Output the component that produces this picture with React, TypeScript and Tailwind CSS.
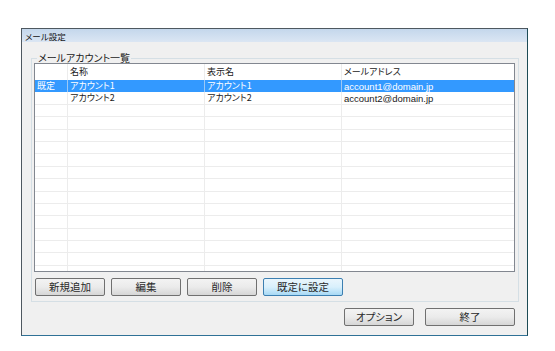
import React from "react";

const jp = "font-['Noto_Sans_CJK_JP','Noto_Sans',sans-serif] [font-feature-settings:'palt']";

const rows = [
  { def: "既定", name: "アカウント1", display: "アカウント1", mail: "account1@domain.jp", selected: true },
  { def: "", name: "アカウント2", display: "アカウント2", mail: "account2@domain.jp", selected: false },
];

function Cell({ w, children, sel }: { w: string; children?: React.ReactNode; sel?: boolean }) {
  return (
    <div
      className={`${w} h-full flex items-center pl-[2px] border-r ${
        sel ? "border-[#9cc8f5] text-white" : "border-[#ececec] text-[#1a1a1a]"
      } text-[9px] leading-[10px] whitespace-nowrap`}
    >
      {children}
    </div>
  );
}

function Btn({ label, w, active }: { label: string; w: string; active?: boolean }) {
  return (
    <button
      className={`${w} h-[18px] rounded-[2px] border text-[10.5px] leading-[14px] text-[#2a2a2a] flex items-center justify-center ${
        active
          ? "border-[#3c7fb1] bg-gradient-to-b from-[#eaf6fd] via-[#d9f0fc] to-[#a7d9f5]"
          : "border-[#707070] bg-gradient-to-b from-[#f3f3f3] via-[#ebebeb] to-[#d6d6d6]"
      }`}
    >
      {label}
    </button>
  );
}

export default function App() {
  const filler = Array.from({ length: 14 });
  return (
    <div className={`w-[555px] h-[351px] bg-white pt-[28px] pl-[21px] ${jp}`}>
      <div className="w-[507px] h-[308px] flex flex-col border border-[#4e5860] border-r-[#1d4b55] border-b-[#2f7196] bg-[#f0f0f0]">
        {/* title bar */}
        <div className="h-[13px] bg-gradient-to-b from-[#c4d7ec] to-[#dbe6f3] flex items-center pl-[3px] text-[8.5px] leading-[12px] text-[#111]">
          メール設定
        </div>

        <div className="flex-1 flex flex-col pl-[9px] pr-[8px]">
          <fieldset className="mt-[11px] border border-[#d5dfe5] pl-[2px] pr-[3px] pb-[5px]">
            <legend className="ml-[3px] px-[1px] text-[10px] leading-[10px] text-[#1a1a1a]">
              メールアカウント一覧
            </legend>

            <div className="h-[209px] border border-[#828790] bg-white flex flex-col overflow-hidden">
              <div className="h-[16px] shrink-0 flex">
                <Cell w="w-[33px]" />
                <Cell w="w-[137px]">名称</Cell>
                <Cell w="w-[137px]">表示名</Cell>
                <div className="flex-1 flex items-center pl-[2px] text-[9px] leading-[10px] text-[#1a1a1a]">メールアドレス</div>
              </div>
              {rows.map((r) => (
                <div
                  key={r.name}
                  className={`h-[12.4px] shrink-0 flex ${r.selected ? "bg-[#3399ff]" : "border-b border-[#ececec]"}`}
                >
                  <Cell w="w-[33px]" sel={r.selected}>{r.def}</Cell>
                  <Cell w="w-[137px]" sel={r.selected}>{r.name}</Cell>
                  <Cell w="w-[137px]" sel={r.selected}>{r.display}</Cell>
                  <div
                    className={`flex-1 flex items-center pl-[2px] font-['Liberation_Sans',Arial,sans-serif] text-[9.5px] leading-[11px] ${
                      r.selected ? "text-white" : "text-[#1a1a1a]"
                    }`}
                  >
                    {r.mail}
                  </div>
                </div>
              ))}
              {filler.map((_, i) => (
                <div key={i} className="h-[12.4px] shrink-0 flex border-b border-[#ececec]">
                  <Cell w="w-[33px]" />
                  <Cell w="w-[137px]" />
                  <Cell w="w-[137px]" />
                  <div className="flex-1" />
                </div>
              ))}
            </div>

            <div className="mt-[6px] ml-[1px] flex gap-[6px]">
              <Btn label="新規追加" w="w-[70px]" />
              <Btn label="編集" w="w-[70px]" />
              <Btn label="削除" w="w-[70px]" />
              <Btn label="既定に設定" w="w-[80px]" active />
            </div>
          </fieldset>

          <div className="mt-[6px] flex justify-end gap-[11px] pr-[4px]">
            <Btn label="オプション" w="w-[70px]" />
            <Btn label="終了" w="w-[90px]" />
          </div>
        </div>
      </div>
    </div>
  );
}
